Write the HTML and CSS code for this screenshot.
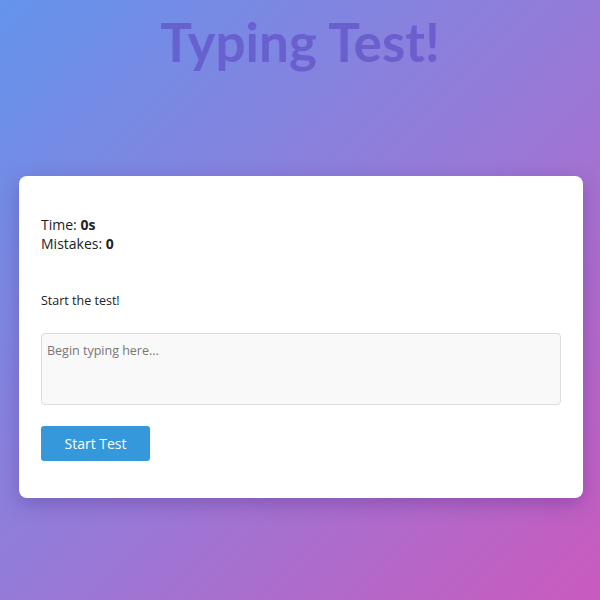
FILE: index.html
```html
<!DOCTYPE html>
<html>
<head>
<meta charset="utf-8">
<link rel="stylesheet" href="styles.css">
</head>
<body>
<h1 class="title">Typing Test!</h1>
<div class="card">
  <div class="stats">
    <div class="stat">Time: <b>0s</b></div>
    <div class="stat">Mistakes: <b>0</b></div>
  </div>
  <p class="prompt">Start the test!</p>
  <textarea class="input" placeholder="Begin typing here..."></textarea>
  <button class="start">Start Test</button>
</div>
</body>
</html>
```
FILE: styles.css
```css
html, body {
  margin: 0;
  height: 100%;
}
body {
  background: linear-gradient(135deg, #6494ec 0%, #9a78d6 55%, #ca5abd 100%);
  font-family: "Open Sans", "DejaVu Sans", sans-serif;
  color: #222;
  overflow: hidden;
}
.title {
  margin: 13px 0 0;
  height: 163px;
  text-align: center;
  font-family: Lato, "Open Sans", sans-serif;
  font-weight: 700;
  font-size: 53px;
  line-height: 58px;
  color: rgba(92, 72, 196, 0.62);
}
.card {
  margin: 0 17px 0 19px;
  background: #fff;
  border-radius: 8px;
  box-shadow: 0 6px 20px rgba(60, 30, 120, 0.3);
  padding: 39px 22px 37px;
  display: flex;
  flex-direction: column;
}
.stats {
  font-size: 14px;
  line-height: 19px;
}
.stat b {
  font-weight: 700;
}
.prompt {
  margin: 39px 0 0;
  font-size: 12.5px;
  line-height: 18px;
}
.input {
  margin-top: 23px;
  height: 72px;
  box-sizing: border-box;
  border: 1px solid #dcdcdc;
  border-radius: 4px;
  background: #f9f9f9;
  padding: 8px 5px;
  font-family: inherit;
  font-size: 12.5px;
  resize: none;
}
.input::placeholder {
  color: #777;
}
.start {
  margin-top: 21px;
  align-self: flex-start;
  width: 109px;
  height: 35px;
  border: none;
  border-radius: 3px;
  background: #3498db;
  color: #fff;
  font-family: inherit;
  font-size: 14px;
}
```
